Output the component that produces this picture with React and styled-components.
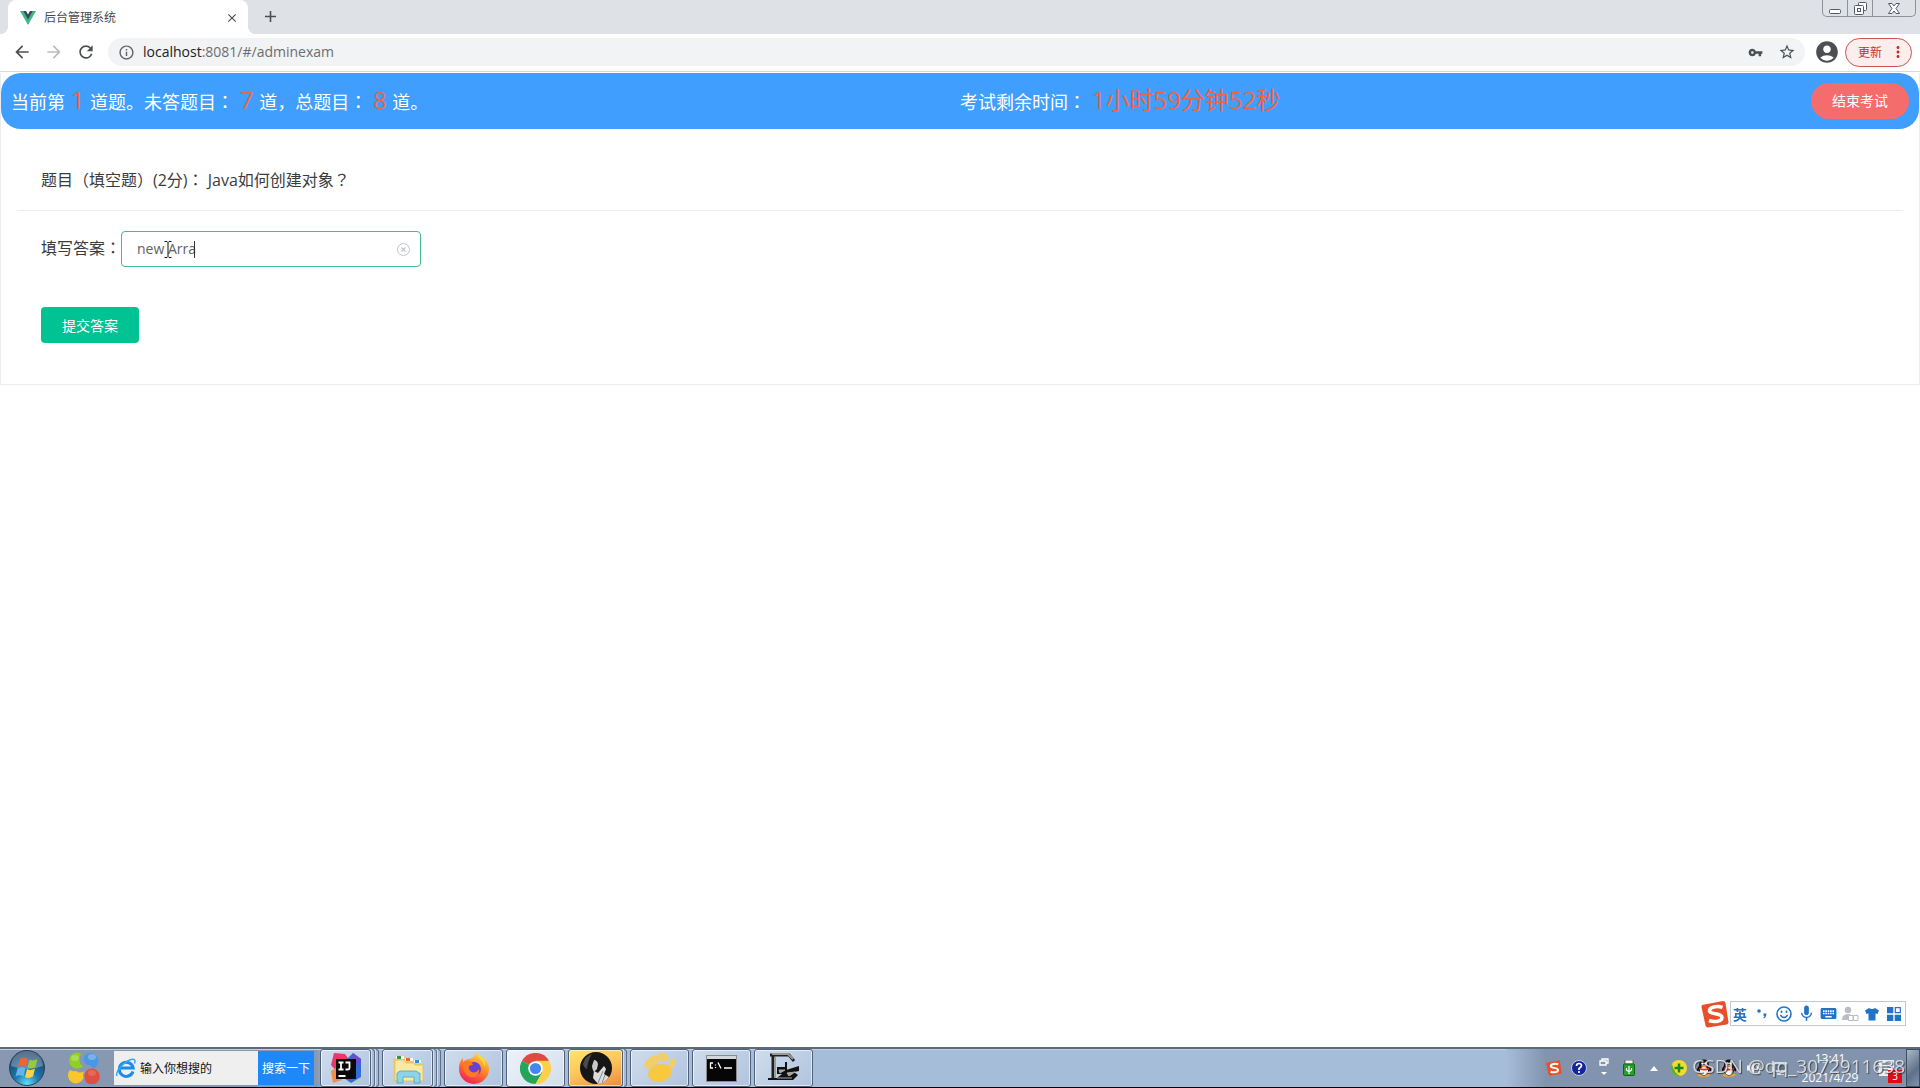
import React from 'react';
import styled, { createGlobalStyle } from 'styled-components';
import {
  MdArrowBack,
  MdArrowForward,
  MdRefresh,
  MdInfoOutline,
  MdVpnKey,
  MdStarBorder,
  MdAccountCircle,
  MdMoreVert,
  MdClose,
  MdAdd,
  MdMic,
  MdKeyboard
} from 'react-icons/md';

const GlobalStyle = createGlobalStyle`
  * {
    box-sizing: border-box;
  }
  body {
    margin: 0;
    background: #fff;
    font-family: "Open Sans", "Noto Sans CJK SC", sans-serif;
    color: #3a3c40;
  }
  button, input {
    font-family: inherit;
    margin: 0;
  }
  button {
    cursor: pointer;
  }
  svg {
    display: block;
    flex-shrink: 0;
  }
`

const Screen = styled.div`
  min-height: 100vh;
  display: flex;
  flex-direction: column;
`

/* ---------- browser ---------- */

const TabStrip = styled.header`
  display: flex;
  align-items: flex-start;
  height: 34px;
  padding: 0 4px 0 8px;
  background: #dee1e6;
`

const Tab = styled.div`
  position: relative;
  display: flex;
  align-items: center;
  width: 240px;
  height: 34px;
  padding: 1px 8px 0 12px;
  background: #fff;
  border-radius: 8px 8px 0 0;

  &::before, &::after {
    content: '';
    position: absolute;
    bottom: 0;
    width: 8px;
    height: 8px;
  }
  &::before {
    left: -8px;
    background: radial-gradient(circle at 0 0, #dee1e6 8px, #fff 8px);
  }
  &::after {
    right: -8px;
    background: radial-gradient(circle at 100% 0, #dee1e6 8px, #fff 8px);
  }
`

const TabTitle = styled.span`
  flex: 1;
  margin-left: 8px;
  font-size: 12px;
  line-height: 16px;
  color: #45494d;
`

const IconButton = styled.button`
  display: flex;
  align-items: center;
  justify-content: center;
  width: ${props => props.$size || 32}px;
  height: ${props => props.$size || 32}px;
  padding: 0;
  border: 0;
  background: none;
  color: ${props => props.$color || '#4b4f54'};
`

const NewTab = styled(IconButton)`
  margin-left: 6px;
`

const WindowControls = styled.div`
  display: flex;
  height: 17px;
  margin-left: auto;
  border: 1px solid #8d9198;
  border-top: 0;
  border-radius: 0 0 5px 5px;
`

const WindowButton = styled.button`
  display: flex;
  align-items: center;
  justify-content: center;
  width: ${props => props.$wide ? 42 : 25}px;
  padding: 0;
  border: 0;
  border-right: ${props => props.$wide ? '0' : '1px solid #8d9198'};
  background: none;
`

const Toolbar = styled.nav`
  display: flex;
  align-items: center;
  height: 38px;
  padding: 0 8px 1px 6px;
  background: #fff;
  border-bottom: 1px solid #d9dbd9;
`

const AddressBar = styled.div`
  flex: 1;
  display: flex;
  align-items: center;
  height: 28px;
  margin: 0 6px;
  padding: 0 6px 0 10px;
  gap: 8px;
  border-radius: 14px;
  background: #f1f3f4;
  color: #5f6368;
`

const Address = styled.span`
  flex: 1;
  font-size: 14px;
  line-height: 20px;
  color: #6a6e73;

  b {
    font-weight: 400;
    color: #202124;
  }
`

const UpdateButton = styled.button`
  display: flex;
  align-items: center;
  justify-content: space-between;
  width: 67px;
  height: 29px;
  margin-left: 2px;
  padding: 0 4px 0 12px;
  border: 1px solid #c95450;
  border-radius: 15px;
  background: #fbeeec;
  color: #c5302b;
  font-size: 12px;
`

/* ---------- exam page ---------- */

const Page = styled.main`
  flex: 1;
  padding-top: 1px;
`

const Card = styled.section`
  border: 1px solid #ebeef0;
  border-top: 0;
`

const Banner = styled.div`
  display: flex;
  align-items: center;
  height: 56px;
  padding: 0 10px 1px;
  border-radius: 20px;
  background: #409eff;
  color: #fff;
  font-size: 18px;
  line-height: 32px;
`

const BannerHalf = styled.div`
  display: flex;
  align-items: center;
  justify-content: space-between;
  flex: 1;
`

const Highlight = styled.span`
  margin: 0 1px;
  font-size: 24px;
  color: #f0643f;
`

/* full-width punctuation that sits in the middle of its box */
const Mark = styled.span`
  font-family: "Noto Sans CJK TC", sans-serif;
  line-height: 1;
`

const EndButton = styled.button`
  width: 98px;
  height: 36px;
  padding: 0 0 1px;
  border: 0;
  border-radius: 18px;
  background: #f56c6c;
  color: #fff;
  font-size: 14px;
`

const Question = styled.div`
  margin: 0 16px;
  padding: 39px 24px 18px;
  border-bottom: 1px solid #ececec;
  font-size: 16px;
  line-height: 24px;
`

const AnswerForm = styled.form`
  display: flex;
  flex-direction: column;
  align-items: flex-start;
  gap: 40px;
  padding: 20px 40px;
`

const AnswerRow = styled.div`
  display: flex;
  align-items: center;
`

const AnswerLabel = styled.label`
  padding-bottom: 2px;
  font-size: 16px;
  line-height: 24px;
`

const Field = styled.div`
  position: relative;
`

const AnswerInput = styled.input`
  display: block;
  width: 300px;
  height: 36px;
  padding: 0 30px 2px 15px;
  border: 1px solid #3dbd90;
  border-radius: 4px;
  outline: 0;
  background: #fff;
  color: #606266;
  font-size: 14px;
`

const Caret = styled.span`
  position: absolute;
  top: 10px;
  left: 73px;
  width: 1px;
  height: 17px;
  background: #303133;
`

const Pointer = styled.svg`
  position: absolute;
  top: 10px;
  left: 43px;
`

const ClearButton = styled(IconButton)`
  position: absolute;
  top: 10px;
  right: 10px;
`

const SubmitButton = styled.button`
  width: 98px;
  height: 36px;
  margin-bottom: 21px;
  padding: 0 0 1px;
  border: 0;
  border-radius: 4px;
  background: #00c292;
  color: #fff;
  font-size: 14px;
`

/* ---------- input method bar ---------- */

const ImeBar = styled.div`
  position: fixed;
  right: 14px;
  bottom: 62px;
  display: flex;
  align-items: center;
  height: 25px;
  border: 1px solid #c3c8cf;
  background: #fff;
  color: #2273c3;
`

const ImeItem = styled.span`
  display: flex;
  align-items: center;
  justify-content: center;
  width: 22px;
  font-size: 14px;
  font-weight: 700;
`

/* ---------- taskbar ---------- */

const TaskBar = styled.footer`
  display: flex;
  align-items: center;
  height: 41px;
  border-top: 2px solid #5b6b7e;
  border-bottom: 1px solid #000;
  background: linear-gradient(90deg, #8798b0 0, #8798b0 316px, #a6bdd9 330px);
  box-shadow: inset 0 1px 0 #c3d0de;
`

const StartButton = styled(IconButton)`
  margin-left: 9px;
`

const PetalButton = styled(IconButton)`
  margin-left: 23px;
`

const SearchBox = styled.form`
  display: flex;
  width: 200px;
  height: 34px;
  margin: 0 6px 0 14px;
  background: #efefef;
`

const SearchInput = styled.input`
  flex: 1;
  min-width: 0;
  padding: 0 0 0 4px;
  border: 0;
  outline: 0;
  background: none;
  font-size: 12px;

  &::placeholder {
    color: #111;
  }
`

const SearchIcon = styled.span`
  display: flex;
  align-items: center;
  padding-left: 2px;
`

const SearchButton = styled.button`
  width: 56px;
  padding: 0;
  border: 0;
  background: #1e88f9;
  color: #fff;
  font-size: 12px;
`

const TaskList = styled.div`
  display: flex;
  align-self: stretch;
  gap: 3px;
`

const TaskSlot = styled.div`
  display: flex;
  width: 59px;
`

const TaskButton = styled.button`
  flex: 1;
  display: flex;
  align-items: center;
  justify-content: center;
  padding: 0;
  border: 1px solid #4f6078;
  border-radius: 3px;
  box-shadow: inset 0 0 0 1px rgba(255, 255, 255, 0.6);
  background: ${props => props.$background || 'linear-gradient(135deg, #cfdcec, #b0c4de)'};
`

const StackEdge = styled.span`
  width: 4px;
  border: 1px solid #5d6f88;
  border-left-color: #d6e0ec;
  border-radius: 0 3px 3px 0;
  background: #a9bbd2;
`

const Tray = styled.div`
  display: flex;
  align-items: center;
  align-self: stretch;
  gap: 1px;
  margin-left: auto;
  padding-left: 36px;
  background: linear-gradient(90deg, #a6bdd9 0, #8294ad 40px, #8294ad 100%);
`

const TrayItem = styled.span`
  position: relative;
  display: flex;
  align-items: center;
  justify-content: center;
  width: 24px;
`

const Clock = styled.div`
  width: 76px;
  margin-right: 6px;
  text-align: center;
  color: #fff;
  font-size: 12px;
  line-height: 19px;
`

const Badge = styled.span`
  position: absolute;
  right: -3px;
  bottom: -5px;
  width: 14px;
  height: 13px;
  background: #e00b12;
  color: #fff;
  font-size: 10px;
  line-height: 13px;
  text-align: center;
`

const ShowDesktop = styled.button`
  align-self: stretch;
  width: 14px;
  margin-left: 6px;
  padding: 0;
  border: 1px solid #3f4d60;
  background: linear-gradient(135deg, #a9b8ca, #5f7188 60%, #8294ad);
`

const Watermark = styled.span`
  position: fixed;
  right: 15px;
  bottom: 7px;
  color: rgba(232, 234, 238, 0.85);
  font-size: 19px;
  line-height: 30px;
  text-shadow: 1px 1px 1px rgba(50, 50, 50, 0.8);
`

/* ---------- drawings ---------- */

const VueLogo = () => (
  <svg width="16" height="16" viewBox="0 0 16 16">
    <path d="M0 1h3.5L8 8.5 12.5 1H16L8 15z" fill="#41b883" />
    <path d="M3.2 1H6l2 3.4L10 1h2.8L8 9.4z" fill="#35495e" />
  </svg>
)

const Sogou = ({ size, className }) => (
  <svg className={className} width={size} height={size} viewBox="0 0 28 28">
    <path d="M1 5 22 1q2 0 2.500 2L27.500 22q0 2-2 2.500L7 27.500q-2 0-2.500-2L0.500 7q0-1.500 0.500-2z" fill="#e8502a" />
    <path d="M21.500 7.500C16 5.500 8 7 8.500 11c.5 4 12.500 1.500 12.500 6.500 0 4-7.500 5-13 3" fill="none" stroke="#fff" strokeWidth="3.500" />
  </svg>
)

const ImeLogo = styled(Sogou)`
  margin-left: -30px;
`

const StartOrb = () => (
  <svg width="36" height="36" viewBox="0 0 36 36">
    <defs>
      <radialGradient id="orb" cx="0.5" cy="0.95" r="0.9">
        <stop offset="0" stopColor="#5fe0f8" />
        <stop offset="0.4" stopColor="#1b78ac" />
        <stop offset="1" stopColor="#1d3c60" />
      </radialGradient>
    </defs>
    <circle cx="18" cy="18" r="17.500" fill="url(#orb)" stroke="#2b435e" />
    <path d="M2 16a16 15 0 0 1 32 0Q18 22 2 16z" fill="#fff" opacity="0.28" />
    <path d="M11 9q4-3 8 0l-2 8q-4-2-8 0z" fill="#ef6334" />
    <path d="M20.500 9.500q4 2 8-.5l-2 8q-4 2.500-8 .5z" fill="#98c93d" />
    <path d="M8.500 18.500q4-2.500 8 0l-2 8q-4-2.500-8 0z" fill="#5cb8ec" />
    <path d="M18 19q4 2 8-.5l-2 8q-4 2.500-8 .5z" fill="#fdd245" />
  </svg>
)

const Petals = () => (
  <svg width="32" height="32" viewBox="0 0 32 32">
    <path d="M13 1.500A8 8 0 1 0 10 16.500q3 0 5-2-6-5-2-13z" fill="#8fd022" />
    <path d="M17 3a8 8 0 1 1 8 13.500q-2-4-7-4-4-5-1-9.500z" fill="#4a98e4" />
    <path d="M2 18a8 8 0 1 0 13.500 8q-1-4 1-7-5 3-8 0-3 1-6.500-1z" fill="#f7c72c" />
    <path d="M18 30a8 8 0 1 0 0-11q-3 5 0 11z" fill="#e04f3f" />
    <ellipse cx="7" cy="6" rx="4" ry="3" fill="#fff" opacity="0.25" />
    <ellipse cx="24" cy="5" rx="4" ry="3" fill="#fff" opacity="0.25" />
    <ellipse cx="24" cy="21" rx="4" ry="3" fill="#fff" opacity="0.15" />
  </svg>
)

const IeLogo = () => (
  <svg width="20" height="20" viewBox="0 0 20 20">
    <path d="M17 13.500A7 7 0 1 1 17.200 10H5" fill="none" stroke="#1a8ceb" strokeWidth="3" />
    <path d="M1 18C-1 14 7 4 15 1.500c4-1.200 4.500 1 3.500 4" fill="none" stroke="#35a8f2" strokeWidth="1.500" />
  </svg>
)

const Idea = () => (
  <svg width="32" height="32" viewBox="0 0 32 32">
    <path d="M4 1 15 2 20 9 16 25 3 30 7 20 1 13z" fill="#e8396f" />
    <path d="M1 19 9 14 12 28 3 31z" fill="#f58c4a" />
    <path d="M18 6 23 1 31 7 31 25 21 31 14 26z" fill="#2f6fd6" />
    <path d="M23 1 31 7 29 14 20 10z" fill="#6a4ed0" />
    <rect x="6" y="7" width="20" height="20" fill="#0a0a0a" />
    <path d="M8.500 10.500h5M11 10.500v7M8.500 17.500h5M15.500 10.500h4v5.500q0 1.500-1.500 1.500h-2.500M8.500 24h7" fill="none" stroke="#fff" strokeWidth="1.800" />
  </svg>
)

const Explorer = () => (
  <svg width="32" height="32" viewBox="0 0 32 32">
    <path d="M1 6h3V3h8l2 3 6-1 1 2h9v22H1z" fill="#eccf73" />
    <path d="M3 8h9l2 3h8l1 2h8v16H3z" fill="#f9e9a3" stroke="#dcb955" strokeWidth="0.7" />
    <path d="M4 4h8v3H4zM13 6h8v3h-8zM22 8h7v3h-7z" fill="#fdfdf6" />
    <path d="M5 4h4v3H5z" fill="#2d9a45" />
    <path d="M14 6h4v3h-4z" fill="#e56a36" />
    <path d="M23 8h4v3h-4z" fill="#2f92cf" />
    <path d="M6 21q0-2 3-2h14q3 0 3 2h2v10h-6v-6H11v6H5V21z" fill="#8ed3e6" stroke="#4aa4c4" strokeWidth="0.8" />
  </svg>
)

const Firefox = () => (
  <svg width="32" height="32" viewBox="0 0 32 32">
    <defs>
      <linearGradient id="fox" x1="0.8" y1="0" x2="0.3" y2="1">
        <stop offset="0" stopColor="#ffe14d" />
        <stop offset="0.45" stopColor="#ff8a24" />
        <stop offset="1" stopColor="#f0195f" />
      </linearGradient>
    </defs>
    <path d="M19 1c3 2 4 4 5 7 1-1 1-2 1-3 5 5 6 9 6 12a15 15 0 0 1-30 0c0-5 1-8 4-11v4c2-2 4-3 6-3 3 0 5-3 8-6z" fill="url(#fox)" />
    <circle cx="16" cy="17" r="7" fill="#6b3fd0" />
    <path d="M5 10c4-2 9-1 10 3-3 0-5 1-4 4 2 5 8 4 10 0 1 6-4 9-9 8-5-2-8-8-7-15z" fill="#ff7a22" />
    <path d="M19 1c0 5 7 7 7 14 2-3 1-6 0-8-2-2-5-4-7-6z" fill="#ffd93b" />
  </svg>
)

const Chrome = () => (
  <svg width="31" height="31" viewBox="0 0 32 32">
    <path d="M16 16 2.100 8A16 16 0 0 1 29.900 8z" fill="#dd4a3e" />
    <path d="M16 16 2.100 8A16 16 0 0 0 16 32l7-12z" fill="#25a45c" />
    <path d="M16 8h13.900A16 16 0 0 1 16 32l7-12z" fill="#fdd04a" />
    <circle cx="16" cy="16" r="7.500" fill="#fff" />
    <circle cx="16" cy="16" r="5.800" fill="#4587f2" />
  </svg>
)

const Portrait = () => (
  <svg width="34" height="34" viewBox="0 0 34 34">
    <circle cx="17" cy="17" r="16" fill="#161616" />
    <path d="M4 13Q6 5 13 3 9 9 8 18 5 17 4 13z" fill="#4a4a4a" />
    <path d="M15 9q3 0 4 4l-1 5-3 3q-2-3-2-6z" fill="#c9c9c9" />
    <path d="M15 20l4 2 6-7 2 3-2 5 5 3q-4 6-11 7l-5-6z" fill="#dcdcdc" />
    <path d="M24 20l-5 12M26 24l-3 8" stroke="#8a8a8a" strokeWidth="1" />
  </svg>
)

const Paw = () => (
  <svg width="34" height="32" viewBox="0 0 34 32">
    <ellipse cx="9" cy="10" rx="9" ry="5" transform="rotate(-38 9 10)" fill="#f2ce6a" />
    <ellipse cx="20" cy="5" rx="6" ry="4" transform="rotate(20 20 5)" fill="#f2ce6a" />
    <ellipse cx="29" cy="12" rx="3" ry="6" transform="rotate(20 29 12)" fill="#f2ce6a" />
    <ellipse cx="17" cy="21" rx="12" ry="8.500" transform="rotate(-15 17 21)" fill="#f8c93f" stroke="#dfc88a" />
  </svg>
)

const Console = () => (
  <svg width="31" height="27" viewBox="0 0 31 27">
    <rect x="0.500" y="0.500" width="30" height="26" fill="#060606" stroke="#8b8b8b" />
    <rect x="1" y="1" width="29" height="3" fill="#d3d7db" />
    <path d="M7 8H4.500v5H7M9.500 9.500v1M9.500 12v1M12 7.500l3 6M18 13h8" fill="none" stroke="#fff" strokeWidth="1.300" />
  </svg>
)

const Recorder = () => (
  <svg width="34" height="30" viewBox="0 0 34 30">
    <path d="M3 2h19l5 6M6 2v25" fill="none" stroke="#202020" strokeWidth="3" />
    <path d="M5 1h16l5 5M8 4v21" fill="none" stroke="#9a9a92" strokeWidth="2" />
    <path d="M10 14h9v3l13-4v5l-5 1 4 3-5 5H1v-2h9l5-4h-5z" fill="#111" />
    <path d="M12 17h6l-5 3zM20 20l8-1-6 4zM10 25h15" fill="#a8a8a0" stroke="#a8a8a0" strokeWidth="1" />
    <path d="M19 9v9" stroke="#111" strokeWidth="2" />
  </svg>
)

const Help = () => (
  <svg width="16" height="16" viewBox="0 0 16 16">
    <circle cx="8" cy="8" r="7.500" fill="#1224a0" stroke="#c5cbe4" />
    <path d="M5.500 6Q5.500 3.500 8 3.500t2.500 2.300Q10.500 7 8 8.500v1.500M8 11v2" fill="none" stroke="#fff" strokeWidth="1.700" />
  </svg>
)

const Restore = () => (
  <svg width="10" height="20" viewBox="0 0 10 20">
    <path d="M3 3V1h6v4H7M1 3h6v4H1z" fill="none" stroke="#fff" strokeWidth="1.300" />
    <path d="M2 14h6l-3 3z" fill="#fff" />
  </svg>
)

const Usb = () => (
  <svg width="12" height="16" viewBox="0 0 12 16">
    <rect x="2" y="0" width="8" height="4" fill="#f0f0f0" stroke="#444" strokeWidth="0.7" />
    <rect x="0.500" y="4" width="11" height="11.500" rx="1" fill="#279d2a" stroke="#116414" />
    <path d="M6 6v8M3.500 8v2L6 12l2.500-2V8" fill="none" stroke="#fff" strokeWidth="1.200" />
  </svg>
)

const Shield = () => (
  <svg width="18" height="18" viewBox="0 0 18 18">
    <circle cx="9" cy="9" r="8" fill="#f3dc2b" />
    <path d="M2 5a8 8 0 0 0 8 12q-6-3-8-12z" fill="#56b32b" />
    <path d="M9 4.500v9M4.500 9h9" stroke="#17891f" strokeWidth="2.500" />
  </svg>
)

const Penguin = () => (
  <svg width="16" height="18" viewBox="0 0 16 18">
    <ellipse cx="8" cy="16" rx="6.500" ry="1.800" fill="#f5a623" />
    <path d="M8 0.500c3.500 0 5 2.500 5 6 2 2 2.500 4 2 6l-2-1q-1 5-5 5t-5-5l-2 1q-.5-3 2-6c0-3.500 1.500-6 5-6z" fill="#111" />
    <ellipse cx="8" cy="12" rx="4" ry="4" fill="#fff" />
    <circle cx="6.500" cy="4.500" r="1.300" fill="#fff" />
    <circle cx="9.500" cy="4.500" r="1.300" fill="#fff" />
    <ellipse cx="8" cy="7" rx="3" ry="1" fill="#f5a623" />
    <path d="M3 8.500q5 2.500 10 0l.3 2q-5 2-10 0z" fill="#e2291f" />
  </svg>
)

const Speaker = () => (
  <svg width="16" height="16" viewBox="0 0 16 16">
    <path d="M1 5.500h3l4-4v13l-4-4H1z" fill="#f3f3f3" />
    <path d="M10.500 5q2 3 0 6M12.500 3q4 5 0 10" fill="none" stroke="#f3f3f3" strokeWidth="1.200" />
  </svg>
)

const Network = () => (
  <svg width="16" height="16" viewBox="0 0 16 16">
    <path d="M4 3h11v8H4zM9.500 11v3M6 14h7M2 1v10" fill="#60738c" stroke="#f3f3f3" strokeWidth="1.400" />
  </svg>
)

const Notes = () => (
  <svg width="20" height="20" viewBox="0 0 20 20">
    <rect x="2" y="2" width="15" height="16" fill="#eef1f4" />
    <path d="M5 6h9M5 9h9M5 12h6" stroke="#6c7989" strokeWidth="1.300" />
    <path d="M1 5h2M1 9h2M1 13h2" stroke="#fff" strokeWidth="1.500" />
  </svg>
)

const Smiley = () => (
  <svg width="16" height="16" viewBox="0 0 16 16" fill="none" stroke="currentColor">
    <circle cx="8" cy="8" r="7" strokeWidth="1.600" />
    <path d="M5.500 4.500v2.500M10.500 4.500v2.500M4.300 9q3.700 5 7.400 0" strokeWidth="1.500" />
  </svg>
)

const Punctuation = () => (
  <svg width="12" height="14" viewBox="0 0 12 14">
    <circle cx="3" cy="4" r="1.800" fill="currentColor" />
    <path d="M7.500 6.500h2.800q.5 3-2.500 5l-.5-.8q1.200-1 1.200-2H7.500z" fill="currentColor" />
  </svg>
)

const Person = () => (
  <svg width="18" height="16" viewBox="0 0 18 16" fill="#b9bec5">
    <circle cx="7" cy="4" r="3.300" />
    <path d="M1 14q0-6 6-6 2 0 3 1H7v5z" />
    <path d="M7.500 9.500h4.500v5H7.500zM12.500 9.500H17v5h-4.500z" fill="#fff" stroke="#b9bec5" />
  </svg>
)

const Shirt = () => (
  <svg width="14" height="14" viewBox="0 0 14 14">
    <path d="M4 1q3 2 6 0l4 2.500-1.500 3.500-2-.5V13.500h-7V6.500l-2 .5L0 3.500z" fill="currentColor" />
  </svg>
)

const Grid = () => (
  <svg width="14" height="14" viewBox="0 0 14 14">
    <path d="M0 0h6.300v6.300H0zM0 7.700h6.300V14H0zM7.700 7.700H14V14H7.700z" fill="currentColor" />
    <path d="M8.300 .6h5v5h-5z" fill="none" stroke="currentColor" strokeWidth="1.200" />
  </svg>
)

const UpArrow = () => (
  <svg width="8" height="5" viewBox="0 0 8 5">
    <path d="M0 5h8L4 0z" fill="#fff" />
  </svg>
)

const TraySogou = () => <Sogou size={16} />
const Mic = () => <MdMic size={19} />
const Keyboard = () => <MdKeyboard size={19} />

const tasks = [
  { name: 'IntelliJ IDEA', Icon: Idea, edges: 2 },
  { name: 'Explorer', Icon: Explorer, edges: 2 },
  { name: 'Firefox', Icon: Firefox, edges: 0 },
  { name: 'Chrome', Icon: Chrome, edges: 0, background: 'linear-gradient(135deg, #edf2f8, #d2deec)' },
  { name: 'Player', Icon: Portrait, edges: 1, background: 'linear-gradient(160deg, #fbe66e, #fbc55b 50%, #f0893c)' },
  { name: 'Navicat', Icon: Paw, edges: 0 },
  { name: 'Console', Icon: Console, edges: 0 },
  { name: 'Recorder', Icon: Recorder, edges: 0 }
]

const imeIcons = [Punctuation, Smiley, Mic, Keyboard, Person, Shirt, Grid]

const trayIcons = [TraySogou, Help, Restore, Usb, UpArrow, Shield, Penguin, Penguin, Speaker, Network]

export default class App extends React.Component {

  state = {
    current: 1,
    unanswered: 7,
    total: 8,
    remaining: '1小时59分钟52秒',
    answer: 'new Arra',
    search: ''
  }

  onChangeAnswer = (event) => {
    this.setState({ answer: event.target.value })
  }

  onChangeSearch = (event) => {
    this.setState({ search: event.target.value })
  }

  clearAnswer = () => {
    this.setState({ answer: '' })
  }

  onSubmit = (event) => {
    event.preventDefault()
  }

  render() {
    const { current, unanswered, total, remaining, answer, search } = this.state

    return (
      <Screen>
        <GlobalStyle />
        <TabStrip>
          <Tab>
            <VueLogo />
            <TabTitle>后台管理系统</TabTitle>
            <IconButton $size={16} aria-label="关闭标签页"><MdClose size={14} /></IconButton>
          </Tab>
          <NewTab aria-label="新标签页"><MdAdd size={19} /></NewTab>
          <WindowControls>
            <WindowButton aria-label="最小化">
              <svg width="12" height="12" viewBox="0 0 12 12">
                <rect x="0.500" y="7.500" width="11" height="4" rx="1" fill="#fff" stroke="#555b66" />
              </svg>
            </WindowButton>
            <WindowButton aria-label="还原">
              <svg width="13" height="13" viewBox="0 0 13 13" fill="#fff" stroke="#555b66">
                <rect x="4.500" y="0.500" width="8" height="8" rx="1" />
                <rect x="0.500" y="3.500" width="9" height="9" rx="1" />
                <rect x="3.500" y="6.500" width="3" height="3" />
              </svg>
            </WindowButton>
            <WindowButton $wide aria-label="关闭">
              <svg width="12" height="11" viewBox="0 0 12 11">
                <path d="M.5.5h3.500L6 3l2-2.500h3.500L8 5.500l3.500 5H8L6 8l-2 2.500H.5L4 5.500z" fill="#fff" stroke="#555b66" />
              </svg>
            </WindowButton>
          </WindowControls>
        </TabStrip>

        <Toolbar>
          <IconButton aria-label="后退"><MdArrowBack size={20} /></IconButton>
          <IconButton $color="#b9bbbe" aria-label="前进"><MdArrowForward size={20} /></IconButton>
          <IconButton aria-label="刷新"><MdRefresh size={20} /></IconButton>
          <AddressBar>
            <MdInfoOutline size={17} />
            <Address><b>localhost</b>:8081/#/adminexam</Address>
            <IconButton $size={24} aria-label="密码"><MdVpnKey size={15} /></IconButton>
            <IconButton $size={24} aria-label="收藏"><MdStarBorder size={18} /></IconButton>
          </AddressBar>
          <IconButton aria-label="用户"><MdAccountCircle size={26} /></IconButton>
          <UpdateButton>更新<MdMoreVert size={18} /></UpdateButton>
        </Toolbar>

        <Page>
          <Card>
            <Banner>
              <BannerHalf>
                <div>
                  当前第 <Highlight>{current}</Highlight> 道题。未答题目<Mark>：</Mark> <Highlight>{unanswered}</Highlight> 道，总题目<Mark>：</Mark> <Highlight>{total}</Highlight> 道。
                </div>
              </BannerHalf>
              <BannerHalf>
                <div>
                  考试剩余时间<Mark>：</Mark> <Highlight>{remaining}</Highlight>
                </div>
                <EndButton>结束考试</EndButton>
              </BannerHalf>
            </Banner>
            <Question>题目（填空题）(2分)<Mark>：</Mark> Java如何创建对象<Mark>？</Mark></Question>
            <AnswerForm onSubmit={this.onSubmit}>
              <AnswerRow>
                <AnswerLabel htmlFor="answer">填写答案<Mark>：</Mark></AnswerLabel>
                <Field>
                  <AnswerInput id="answer" value={answer} onChange={this.onChangeAnswer} />
                  <Caret />
                  <Pointer width="8" height="17" viewBox="0 0 8 17">
                    <path d="M.5 .5H3l1 1 1-1h2.500M4 1.500v14M.5 16.500H3l1-1 1 1h2.500" fill="none" stroke="#111" />
                  </Pointer>
                  <ClearButton type="button" $size={16} $color="#c0c4cc" aria-label="清空" onClick={this.clearAnswer}>
                    <svg width="13" height="13" viewBox="0 0 13 13" fill="none" stroke="currentColor">
                      <circle cx="6.500" cy="6.500" r="6" />
                      <path d="M4.500 4.500l4 4M8.500 4.500l-4 4" strokeWidth="1.200" />
                    </svg>
                  </ClearButton>
                </Field>
              </AnswerRow>
              <SubmitButton type="submit">提交答案</SubmitButton>
            </AnswerForm>
          </Card>
        </Page>

        <ImeBar>
          <ImeLogo size={28} />
          <ImeItem>英</ImeItem>
          {imeIcons.map((Icon, index) => <ImeItem key={index}><Icon /></ImeItem>)}
        </ImeBar>

        <TaskBar>
          <StartButton $size={36} aria-label="开始"><StartOrb /></StartButton>
          <PetalButton aria-label="桌面助手"><Petals /></PetalButton>
          <SearchBox onSubmit={this.onSubmit}>
            <SearchIcon><IeLogo /></SearchIcon>
            <SearchInput aria-label="搜索" placeholder="输入你想搜的" value={search} onChange={this.onChangeSearch} />
            <SearchButton>搜索一下</SearchButton>
          </SearchBox>
          <TaskList>
            {tasks.map(({ name, Icon, edges, background }) => (
              <TaskSlot key={name}>
                <TaskButton $background={background} aria-label={name}><Icon /></TaskButton>
                {edges > 0 && <StackEdge />}
                {edges > 1 && <StackEdge />}
              </TaskSlot>
            ))}
          </TaskList>
          <Tray>
            {trayIcons.map((Icon, index) => <TrayItem key={index}><Icon /></TrayItem>)}
            <Clock>13:41<br />2021/4/29</Clock>
            <TrayItem><Notes /><Badge>3</Badge></TrayItem>
            <ShowDesktop aria-label="显示桌面" />
          </Tray>
        </TaskBar>
        <Watermark>CSDN @qq_3072911638</Watermark>
      </Screen>
    )
  }
}
